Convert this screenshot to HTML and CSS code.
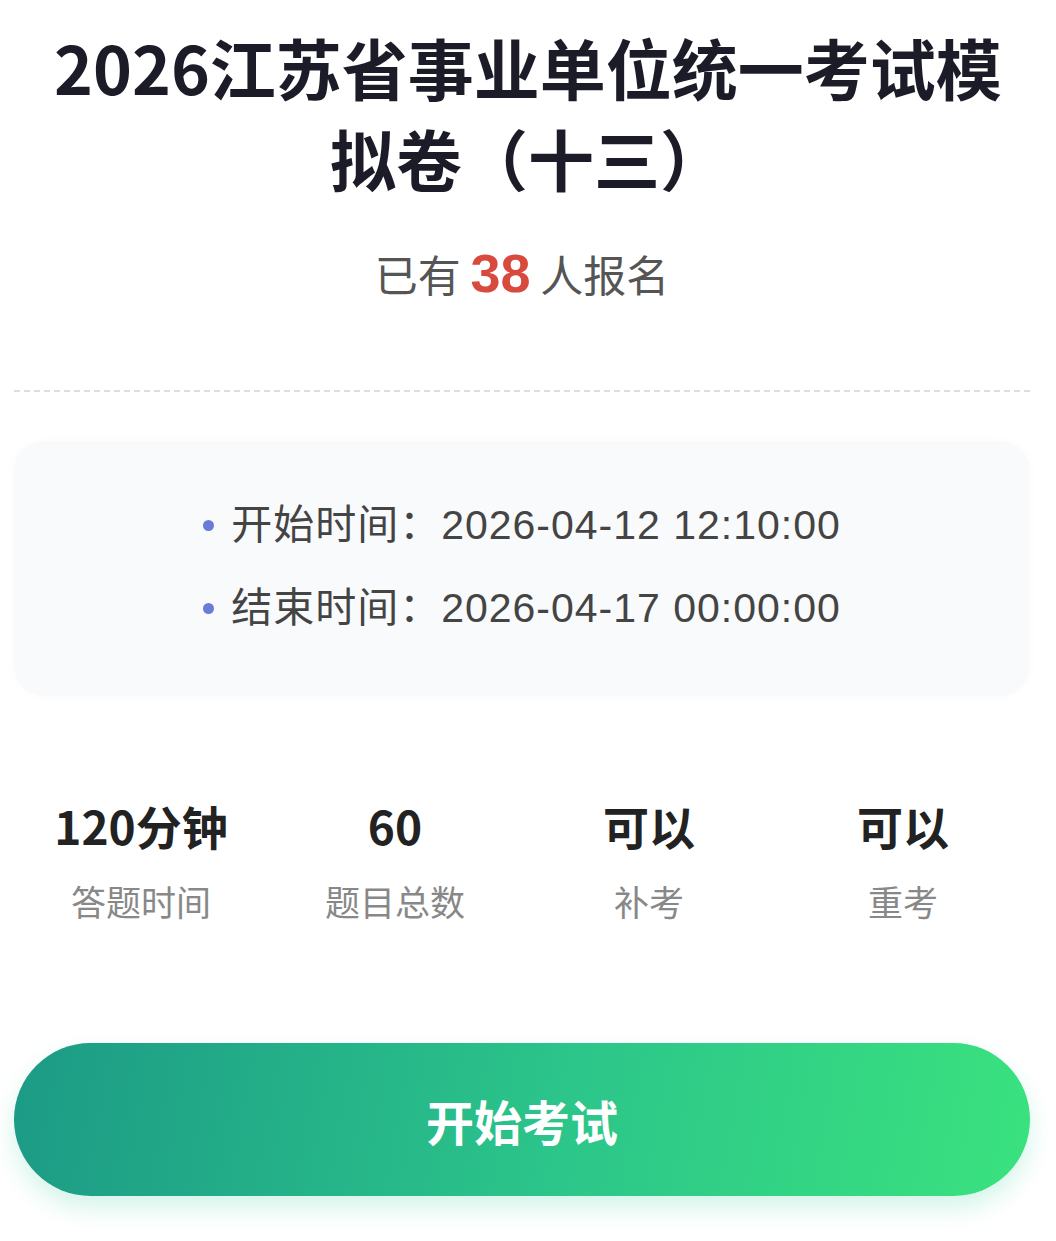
FILE: index.html
```html
<!DOCTYPE html>
<html lang="zh-CN">
<head>
    <meta charset="UTF-8">
    <meta name="viewport" content="width=device-width, initial-scale=1.0">
    <title>模拟卷</title>
    <link rel="stylesheet" href="styles.css">
</head>
<body>

<div class="container">
    <h1 class="exam-title">2026江苏省事业单位统一考试模拟卷（十三）</h1>
    <p class="signup">已有 <span class="signup-count">38</span> 人报名</p>

    <div class="divider"></div>

    <div class="time-card">
        <p class="time-row"><span class="dot"></span>开始时间：2026-04-12 12:10:00</p>
        <p class="time-row"><span class="dot"></span>结束时间：2026-04-17 00:00:00</p>
    </div>

    <div class="stats">
        <div class="stat">
            <div class="stat-value">120分钟</div>
            <div class="stat-label">答题时间</div>
        </div>
        <div class="stat">
            <div class="stat-value">60</div>
            <div class="stat-label">题目总数</div>
        </div>
        <div class="stat">
            <div class="stat-value">可以</div>
            <div class="stat-label">补考</div>
        </div>
        <div class="stat">
            <div class="stat-value">可以</div>
            <div class="stat-label">重考</div>
        </div>
    </div>

    <button class="start-button">开始考试</button>
</div>

</body>
</html>
```

FILE: styles.css
```css
body {
    margin: 0;
    background-color: #ffffff;
    font-family: "Noto Sans CJK SC", "Noto Sans", sans-serif;
}
.container {
    padding: 0 26px 40px 14px;
}
.exam-title {
    margin: 0;
    padding: 21px 24px 0 36px;
    font-size: 66px;
    line-height: 91px;
    font-weight: 700;
    color: #1c1c28;
    text-align: center;
}
.signup {
    margin: 42px 0 0;
    font-size: 43px;
    line-height: 56px;
    color: #555555;
    text-align: center;
}
.signup-count {
    font-family: "Liberation Sans", sans-serif;
    font-size: 54px;
    font-weight: 700;
    color: #d84a3e;
}
.divider {
    margin-top: 89px;
    border-top: 2px dashed #dedede;
}
.time-card {
    margin-top: 49px;
    padding: 43px 0 46px;
    background-color: #f9fafc;
    border-radius: 30px;
    box-shadow: 0 0 12px rgba(0, 0, 0, 0.02);
}
.time-row {
    margin: 0;
    display: flex;
    justify-content: center;
    align-items: center;
    font-family: "Liberation Sans", "Noto Sans CJK SC", sans-serif;
    font-size: 41px;
    line-height: 83px;
    letter-spacing: 1px;
    color: #444444;
}
.dot {
    width: 11px;
    height: 11px;
    border-radius: 50%;
    background-color: #6b7bd6;
    margin-right: 17px;
}
.stats {
    display: grid;
    grid-template-columns: repeat(4, 1fr);
    margin-top: 99px;
}
.stat {
    text-align: center;
}
.stat-value {
    font-size: 46px;
    line-height: 60px;
    font-weight: 700;
    color: #222222;
}
.stat-label {
    margin-top: 21px;
    font-size: 35px;
    line-height: 50px;
    color: #888888;
}
.start-button {
    display: block;
    width: 100%;
    height: 153px;
    margin-top: 117px;
    border: none;
    border-radius: 77px;
    background: linear-gradient(100deg, #1c9a86 0%, #2cc68a 55%, #3ae27e 100%);
    box-shadow: 0 12px 24px rgba(40, 200, 150, 0.2);
    color: #ffffff;
    font-family: "Noto Sans CJK SC", sans-serif;
    font-size: 48px;
    font-weight: 700;
    cursor: pointer;
}
```
